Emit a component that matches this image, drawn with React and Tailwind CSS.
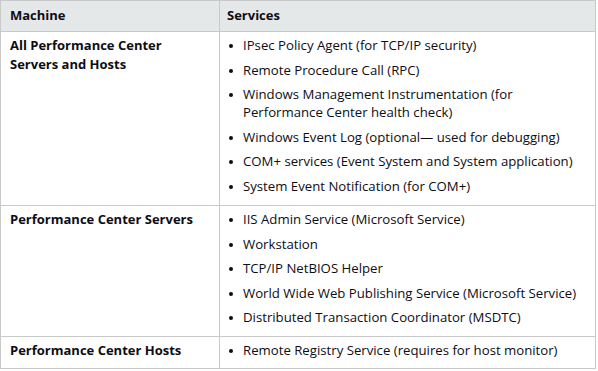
import React from "react";

const rows = [
  {
    machine: ["All Performance Center", "Servers and Hosts"],
    services: [
      "IPsec Policy Agent (for TCP/IP security)",
      "Remote Procedure Call (RPC)",
      ["Windows Management Instrumentation (for", "Performance Center health check)"],
      "Windows Event Log (optional\u2014 used for debugging)",
      "COM+ services (Event System and System application)",
      "System Event Notification (for COM+)",
    ],
  },
  {
    machine: ["Performance Center Servers"],
    services: [
      "IIS Admin Service (Microsoft Service)",
      "Workstation",
      "TCP/IP NetBIOS Helper",
      "World Wide Web Publishing Service (Microsoft Service)",
      "Distributed Transaction Coordinator (MSDTC)",
    ],
  },
  {
    machine: ["Performance Center Hosts"],
    services: ["Remote Registry Service (requires for host monitor)"],
  },
];

export default function App() {
  return (
    <div className="bg-white w-[598px] h-[371px] text-[#0d0d14] font-['Open_Sans',sans-serif]">
      <div className="w-[596px] border border-[#c9c9c9]">
        <div className="grid grid-cols-[219px_1fr] bg-[#e5e8e9] border-b border-[#c9c9c9] h-[31px] text-[13px] font-bold">
          <div className="border-r border-[#c9c9c9] pl-[9px] pt-[5px] leading-[18px]">Machine</div>
          <div className="pl-[7px] pt-[5px] leading-[18px]">Services</div>
        </div>
        {rows.map((r, i) => (
          <div
            key={i}
            className={`grid grid-cols-[219px_1fr] ${i < rows.length - 1 ? "border-b border-[#c9c9c9]" : ""}`}
          >
            <div className="border-r border-[#c9c9c9] pl-[9px] pt-[4px] text-[13px] font-bold leading-[19px]">
              {r.machine.map((m, j) => (
                <div key={j}>{m}</div>
              ))}
            </div>
            <ul className={`pl-[9px] pt-[4px] ${i < rows.length - 1 ? "pb-[10px]" : "pb-[9px]"} flex flex-col gap-[6.6px] text-[13.2px] leading-[18px]`}>
              {r.services.map((s, j) => (
                <li key={j} className="flex items-start">
                  <span className="mt-[8px] w-[4px] h-[4px] rounded-full bg-[#0d0d14] shrink-0"></span>
                  <span className="ml-[10px]">
                    {Array.isArray(s)
                      ? s.map((t, k) => (
                          <div key={k}>{t}</div>
                        ))
                      : s}
                  </span>
                </li>
              ))}
            </ul>
          </div>
        ))}
      </div>
    </div>
  );
}
